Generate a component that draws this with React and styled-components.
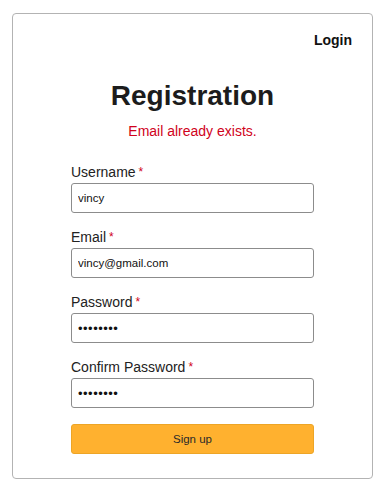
import React from "react";
import styled, { createGlobalStyle } from "styled-components";

const GlobalStyle = createGlobalStyle`
  html, body {
    margin: 0;
    padding: 0;
    background: #ffffff;
    font-family: "Liberation Sans", Arial, Helvetica, sans-serif;
  }
`;

const fields = [
  { id: "username", label: "Username", type: "text", value: "vincy" },
  { id: "email", label: "Email", type: "email", value: "vincy@gmail.com" },
  { id: "password", label: "Password", type: "password", value: "12345678" },
  { id: "confirm", label: "Confirm Password", type: "password", value: "12345678" },
];

const App = () => {
  return (
    <>
      <GlobalStyle />
      <Card>
        <TopBar>
          <LoginLink href="#">Login</LoginLink>
        </TopBar>
        <Title>Registration</Title>
        <ErrorText>Email already exists.</ErrorText>
        <Form onSubmit={(e) => e.preventDefault()}>
          {fields.map((f) => (
            <Field key={f.id}>
              <Label htmlFor={f.id}>
                {f.label}
                <Required>*</Required>
              </Label>
              <Input
                id={f.id}
                type={f.type}
                defaultValue={f.value}
                $secret={f.type === "password"}
              />
            </Field>
          ))}
          <SubmitButton type="submit">Sign up</SubmitButton>
        </Form>
      </Card>
    </>
  );
};
export default App;

const Card = styled.div`
  box-sizing: border-box;
  margin: 13px 14px 0 12px;
  width: 361px;
  height: 466px;
  border: 1px solid #b3b3b3;
  border-radius: 4px;
  padding: 18px 20px 0 20px;
  display: flex;
  flex-direction: column;
  align-items: center;
`;

const TopBar = styled.div`
  width: 100%;
  display: flex;
  justify-content: flex-end;
`;

const LoginLink = styled.a`
  font-size: 14px;
  line-height: 16px;
  font-weight: bold;
  color: #111111;
  text-decoration: none;
`;

const Title = styled.h1`
  margin: 32px 0 0 0;
  font-size: 28px;
  line-height: 32px;
  font-weight: bold;
  color: #1c1c1c;
`;

const ErrorText = styled.p`
  margin: 11px 0 0 0;
  font-size: 14px;
  line-height: 16px;
  color: #d0021b;
`;

const Form = styled.form`
  margin-top: 25px;
  width: 243px;
  display: flex;
  flex-direction: column;
  gap: 16px;
`;

const Field = styled.div`
  display: flex;
  flex-direction: column;
  gap: 3px;
`;

const Label = styled.label`
  font-size: 14px;
  line-height: 16px;
  color: #222222;
`;

const Required = styled.span`
  color: #d0021b;
  font-size: 12px;
  margin-left: 3px;
  vertical-align: top;
`;

const Input = styled.input`
  box-sizing: border-box;
  width: 100%;
  height: 30px;
  margin: 0;
  padding: 0 6px;
  border: 1px solid #8c8c8c;
  border-radius: 3px;
  font-family: "Liberation Sans", Arial, sans-serif;
  font-size: ${(p) => (p.$secret ? "13px" : "11.5px")};
  letter-spacing: ${(p) => (p.$secret ? "0.5px" : "0")};
  color: #111111;
  background: #ffffff;
  outline: none;
`;

const SubmitButton = styled.button`
  box-sizing: border-box;
  width: 100%;
  height: 30px;
  margin-top: 0;
  border: 1px solid #eda526;
  border-radius: 3px;
  background: #ffb12f;
  color: #2a2a2a;
  font-family: "Liberation Sans", Arial, sans-serif;
  font-size: 11.5px;
  cursor: pointer;
`;
